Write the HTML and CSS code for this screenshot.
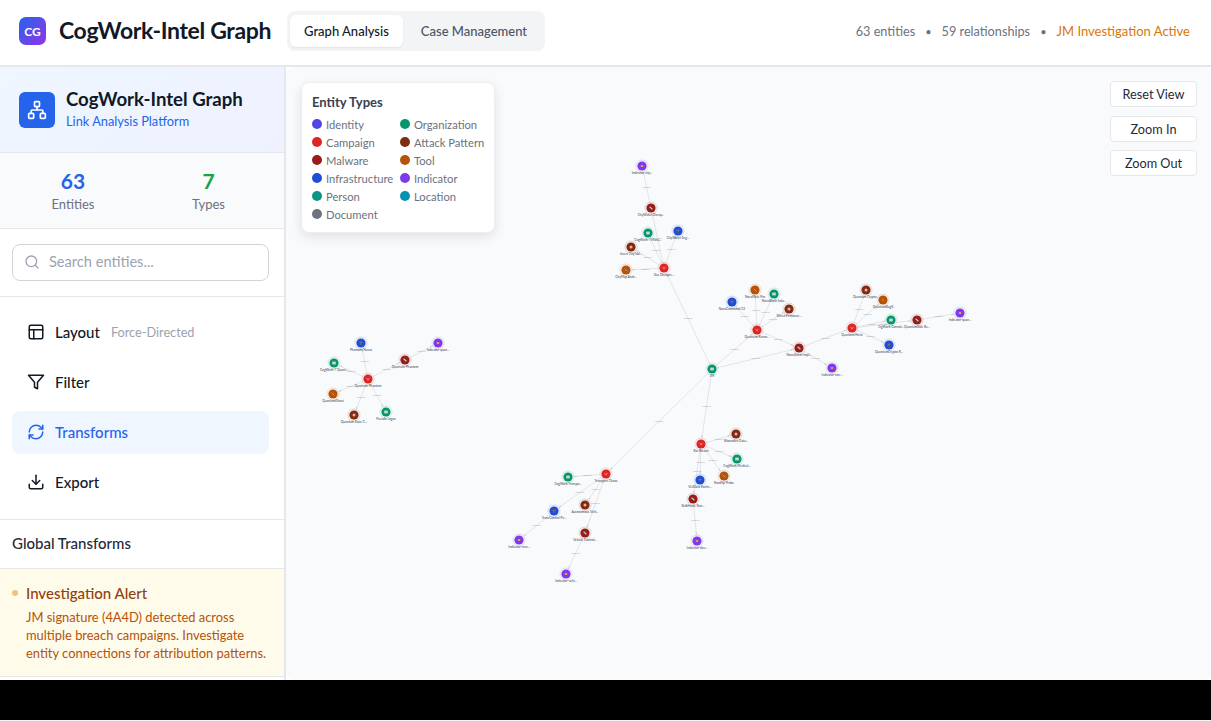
FILE: index.html
```html
<!DOCTYPE html>
<html lang="en">
<head>
    <meta charset="UTF-8">
    <meta name="viewport" content="width=device-width, initial-scale=1.0">
    <title>CogWork-Intel Graph</title>
    <link rel="stylesheet" href="styles.css">
</head>
<body>

<div class="app">
    <header class="topbar">
        <div class="logo">CG</div>
        <div class="app-title">CogWork-Intel Graph</div>
        <nav class="tabs">
            <div class="tab active">Graph Analysis</div>
            <div class="tab">Case Management</div>
        </nav>
        <div class="top-stats">
            <span>63 entities</span>
            <span class="sep">•</span>
            <span>59 relationships</span>
            <span class="sep">•</span>
            <span class="active-case">JM Investigation Active</span>
        </div>
    </header>

    <div class="workspace">
        <aside class="sidebar">
            <div class="side-head">
                <div class="side-icon">
                    <svg viewBox="0 0 24 24" width="20" height="20" fill="none" stroke="#fff" stroke-width="2" stroke-linecap="round" stroke-linejoin="round">
                        <rect x="16" y="16" width="6" height="6" rx="1"/>
                        <rect x="2" y="16" width="6" height="6" rx="1"/>
                        <rect x="9" y="2" width="6" height="6" rx="1"/>
                        <path d="M5 16v-3a1 1 0 0 1 1-1h12a1 1 0 0 1 1 1v3"/>
                        <path d="M12 12V8"/>
                    </svg>
                </div>
                <div class="side-text">
                    <div class="side-title">CogWork-Intel Graph</div>
                    <div class="side-sub">Link Analysis Platform</div>
                </div>
            </div>

            <div class="side-stats">
                <div class="stat">
                    <div class="stat-num blue">63</div>
                    <div class="stat-label">Entities</div>
                </div>
                <div class="stat">
                    <div class="stat-num green">7</div>
                    <div class="stat-label">Types</div>
                </div>
            </div>

            <div class="search-wrap">
                <div class="search">
                    <svg viewBox="0 0 24 24" width="16" height="16" fill="none" stroke="#9ca3af" stroke-width="2" stroke-linecap="round" stroke-linejoin="round">
                        <circle cx="11" cy="11" r="8"/>
                        <path d="m21 21-4.3-4.3"/>
                    </svg>
                    <span>Search entities...</span>
                </div>
            </div>

            <div class="side-nav">
                <div class="nav-item">
                    <svg viewBox="0 0 24 24" width="18" height="18" fill="none" stroke="currentColor" stroke-width="2" stroke-linecap="round" stroke-linejoin="round">
                        <rect x="3" y="3" width="18" height="18" rx="2"/>
                        <path d="M3 9h18"/>
                        <path d="M9 21V9"/>
                    </svg>
                    <span>Layout</span>
                    <small>Force-Directed</small>
                </div>
                <div class="nav-item">
                    <svg viewBox="0 0 24 24" width="18" height="18" fill="none" stroke="currentColor" stroke-width="2" stroke-linecap="round" stroke-linejoin="round">
                        <path d="M22 3H2l8 9.46V19l4 2v-8.54L22 3z"/>
                    </svg>
                    <span>Filter</span>
                </div>
                <div class="nav-item selected">
                    <svg viewBox="0 0 24 24" width="18" height="18" fill="none" stroke="currentColor" stroke-width="2" stroke-linecap="round" stroke-linejoin="round">
                        <path d="M3 12a9 9 0 0 1 9-9 9.75 9.75 0 0 1 6.74 2.74L21 8"/>
                        <path d="M21 3v5h-5"/>
                        <path d="M21 12a9 9 0 0 1-9 9 9.75 9.75 0 0 1-6.74-2.74L3 16"/>
                        <path d="M8 16H3v5"/>
                    </svg>
                    <span>Transforms</span>
                </div>
                <div class="nav-item">
                    <svg viewBox="0 0 24 24" width="18" height="18" fill="none" stroke="currentColor" stroke-width="2" stroke-linecap="round" stroke-linejoin="round">
                        <path d="M21 15v4a2 2 0 0 1-2 2H5a2 2 0 0 1-2-2v-4"/>
                        <path d="m7 10 5 5 5-5"/>
                        <path d="M12 15V3"/>
                    </svg>
                    <span>Export</span>
                </div>
            </div>

            <div class="global-transforms">Global Transforms</div>

            <div class="alert">
                <div class="alert-head">
                    <span class="alert-dot"></span>
                    <span>Investigation Alert</span>
                </div>
                <p>JM signature (4A4D) detected across multiple breach campaigns. Investigate entity connections for attribution patterns.</p>
            </div>
        </aside>

        <main class="canvas">
            <svg class="graph" id="graph" viewBox="286 67 925 613"></svg>

            <div class="legend">
                <div class="legend-title">Entity Types</div>
                <div class="legend-grid">
                    <div class="legend-item"><i class="c-identity"></i>Identity</div>
                    <div class="legend-item"><i class="c-org"></i>Organization</div>
                    <div class="legend-item"><i class="c-campaign"></i>Campaign</div>
                    <div class="legend-item"><i class="c-attack"></i>Attack Pattern</div>
                    <div class="legend-item"><i class="c-malware"></i>Malware</div>
                    <div class="legend-item"><i class="c-tool"></i>Tool</div>
                    <div class="legend-item"><i class="c-infra"></i>Infrastructure</div>
                    <div class="legend-item"><i class="c-indicator"></i>Indicator</div>
                    <div class="legend-item"><i class="c-person"></i>Person</div>
                    <div class="legend-item"><i class="c-location"></i>Location</div>
                    <div class="legend-item"><i class="c-document"></i>Document</div>
                </div>
            </div>

            <div class="controls">
                <button type="button">Reset View</button>
                <button type="button">Zoom In</button>
                <button type="button">Zoom Out</button>
            </div>
        </main>
    </div>
</div>

<div class="blackout"></div>

<script src="graph.js"></script>
</body>
</html>
```

FILE: styles.css
```css
html, body {
    margin: 0;
    padding: 0;
    height: 100%;
    overflow: hidden;
    background-color: #f3f4f6;
    font-family: Lato, "Noto Sans", sans-serif;
}

.app {
    height: 680px;
    display: flex;
    flex-direction: column;
    background-color: #fff;
}

.blackout {
    height: 40px;
    background-color: #000;
}

/* top bar */
.topbar {
    height: 62px;
    flex: none;
    display: flex;
    align-items: center;
    padding: 0 21px 3px 19px;
    background-color: #fff;
    border-bottom: 2px solid #e5e7eb;
}

.logo {
    width: 27px;
    height: 28px;
    border-radius: 7px;
    background: linear-gradient(135deg, #2563eb, #9333ea);
    color: #fff;
    font-size: 12px;
    font-weight: 700;
    display: flex;
    align-items: center;
    justify-content: center;
}

.app-title {
    margin-left: 13px;
    margin-bottom: 3px;
    font-size: 23px;
    font-weight: 700;
    letter-spacing: -0.35px;
    color: #111827;
}

.tabs {
    margin-left: 16px;
    padding: 4px 3px;
    display: flex;
    height: 32px;
    background-color: #f3f4f6;
    border-radius: 8px;
}

.tab {
    padding: 0 15px 0 18px;
    font-size: 13px;
    line-height: 32px;
    font-weight: 500;
    color: #4b5563;
    border-radius: 6px;
}

.tab.active {
    padding: 0 14px;
    background-color: #fff;
    color: #111827;
    box-shadow: 0 1px 2px rgba(0, 0, 0, 0.08);
}

.top-stats {
    margin-left: auto;
    display: flex;
    align-items: center;
    gap: 10px;
    font-size: 12.7px;
    color: #6b7280;
}

.top-stats .sep {
    font-size: 11px;
}

.active-case {
    font-size: 13px;
    color: #d97706;
}

.workspace {
    flex: 1;
    min-height: 0;
    display: flex;
}

/* sidebar */
.sidebar {
    width: 284px;
    flex: none;
    overflow: hidden;
    background-color: #fff;
    border-right: 2px solid #e5e7eb;
}

.side-head {
    height: 85px;
    padding-left: 19px;
    display: flex;
    align-items: center;
    gap: 11px;
    background: linear-gradient(135deg, #eff6ff, #eef2ff);
    border-bottom: 1px solid #e5e7eb;
}

.side-icon {
    width: 36px;
    height: 36px;
    border-radius: 6px;
    background-color: #2563eb;
    display: flex;
    align-items: center;
    justify-content: center;
}

.side-text {
    margin-bottom: 3px;
}

.side-title {
    font-size: 18.6px;
    font-weight: 700;
    color: #111827;
}

.side-sub {
    margin-top: 3px;
    font-size: 12.8px;
    color: #2563eb;
}

.side-stats {
    height: 75px;
    display: grid;
    grid-template-columns: 146px 125px;
    align-items: center;
    text-align: center;
    background-color: #f9fafb;
    border-bottom: 1px solid #e5e7eb;
}

.stat-num {
    font-size: 21px;
    font-weight: 700;
    line-height: 22px;
}

.stat-num.blue { color: #2563eb; }
.stat-num.green { color: #16a34a; }

.stat-label {
    margin-top: 4px;
    font-size: 13px;
    color: #6b7280;
}

.search-wrap {
    height: 68px;
    padding: 15px 15px 0 12px;
    box-sizing: border-box;
    border-bottom: 1px solid #e5e7eb;
}

.search {
    height: 37px;
    box-sizing: border-box;
    padding: 0 0 2px 11px;
    display: flex;
    align-items: center;
    gap: 9px;
    border: 1px solid #d1d5db;
    border-radius: 8px;
    font-size: 14.6px;
    color: #9ca3af;
}

.side-nav {
    height: 223px;
    box-sizing: border-box;
    padding: 14px 15px 0 12px;
    display: flex;
    flex-direction: column;
    gap: 7px;
    border-bottom: 1px solid #e5e7eb;
}

.nav-item {
    height: 43px;
    box-sizing: border-box;
    flex: none;
    padding: 0 0 2px 15px;
    display: flex;
    align-items: center;
    gap: 10px;
    border-radius: 8px;
    font-size: 15px;
    font-weight: 500;
    color: #111827;
}

.nav-item small {
    margin-left: 1px;
    font-size: 12.7px;
    font-weight: 400;
    color: #9ca3af;
}

.nav-item.selected {
    background-color: #eff6ff;
    color: #2563eb;
}

.global-transforms {
    height: 49px;
    box-sizing: border-box;
    padding-left: 12px;
    line-height: 46px;
    font-size: 15px;
    font-weight: 500;
    color: #1f2937;
    border-bottom: 1px solid #e5e7eb;
}

.alert {
    height: 108px;
    box-sizing: border-box;
    padding: 15px 15px 0 12px;
    background-color: #fffbeb;
    border-bottom: 1px solid #e5e7eb;
}

.alert-head {
    display: flex;
    align-items: center;
    gap: 8px;
    font-size: 15px;
    font-weight: 500;
    color: #92400e;
}

.alert-dot {
    width: 6px;
    height: 6px;
    border-radius: 50%;
    background-color: #f3c17b;
}

.alert p {
    margin: 6px 0 0 14px;
    font-size: 12.9px;
    line-height: 18px;
    color: #b45309;
}

/* graph canvas */
.canvas {
    flex: 1;
    position: relative;
    background-color: #f8fafc;
    border-radius: 8px;
    overflow: hidden;
}

.graph {
    position: absolute;
    inset: 0;
    width: 100%;
    height: 100%;
}

.graph .edge {
    stroke: #d9dbe0;
    stroke-width: 0.7;
}

.graph .arrow {
    fill: #c9ccd2;
}

.graph .edge-label {
    font-size: 2.2px;
    fill: #9ca3af;
    text-anchor: middle;
}

.graph .node-label {
    font-size: 3.2px;
    fill: #374151;
    text-anchor: middle;
}

.legend {
    position: absolute;
    top: 15px;
    left: 15px;
    width: 194px;
    height: 151px;
    box-sizing: border-box;
    padding: 11px 10px;
    background-color: #fff;
    border: 1px solid #eceef1;
    border-radius: 8px;
    box-shadow: 0 4px 12px rgba(0, 0, 0, 0.1);
}

.legend-title {
    font-size: 13px;
    font-weight: 700;
    line-height: 16px;
    color: #374151;
}

.legend-grid {
    margin-top: 5px;
    display: grid;
    grid-template-columns: 88px 1fr;
    grid-auto-rows: 18px;
}

.legend-item {
    display: flex;
    align-items: center;
    gap: 4px;
    font-size: 11.2px;
    color: #6b7280;
    white-space: nowrap;
}

.legend-item i {
    width: 10px;
    height: 10px;
    border-radius: 50%;
}

.c-identity { background-color: #4f46e5; }
.c-org { background-color: #059669; }
.c-campaign { background-color: #dc2626; }
.c-attack { background-color: #7c2d12; }
.c-malware { background-color: #991b1b; }
.c-tool { background-color: #b45309; }
.c-infra { background-color: #1d4ed8; }
.c-indicator { background-color: #7c3aed; }
.c-person { background-color: #0d9488; }
.c-location { background-color: #0891b2; }
.c-document { background-color: #6b7280; }

.controls {
    position: absolute;
    top: 14px;
    right: 14px;
    width: 87px;
    display: flex;
    flex-direction: column;
    gap: 8.5px;
}

.controls button {
    height: 26px;
    padding: 0;
    font-family: inherit;
    font-size: 12.7px;
    color: #1f2937;
    background-color: #fff;
    border: 1px solid #e5e7eb;
    border-radius: 4px;
}
```

FILE: graph.js
```js
const COLORS = {
    campaign: "#dc2626",
    malware: "#991b1b",
    attack: "#7c2d12",
    tool: "#b45309",
    org: "#059669",
    infra: "#1d4ed8",
    indicator: "#7c3aed"
};

// id: [type, x, y, label]
const NODES = {
    jm: ["org", 712, 369, "JM"],

    gas: ["campaign", 664, 268, "Gas Disrupte..."],
    g1: ["indicator", 642, 166, "Indicator-city..."],
    g2: ["malware", 651, 208, "CityWater Disrup..."],
    g3: ["org", 648, 233, "CogWork-7 Manu..."],
    g4: ["infra", 678, 231, "CityWater Seg..."],
    g5: ["attack", 631, 247, "Insert CityTabl..."],
    g6: ["tool", 626, 270, "CityMap Andr..."],

    ransom: ["campaign", 757, 330, "Quantum Ranso..."],
    r1: ["infra", 732, 302, "NovaCommand C2"],
    r2: ["tool", 755, 290, "NovaMate Pro"],
    r3: ["org", 774, 294, "NovaBlock Indu..."],
    r4: ["attack", 789, 309, "Wired Firmware..."],
    r5: ["malware", 799, 348, "NovaStorm Impl..."],
    r6: ["indicator", 832, 368, "Indicator-nov..."],

    heist: ["campaign", 852, 328, "Quantum Heist"],
    h1: ["attack", 866, 290, "Quantum Crypto..."],
    h2: ["tool", 883, 300, "QuantumBugX"],
    h3: ["org", 891, 320, "CigWork Control..."],
    h4: ["malware", 917, 320, "QuantumSide Re..."],
    h5: ["infra", 889, 345, "QuantumCrypto R..."],
    h6: ["indicator", 960, 313, "Indicator-quan..."],

    phantom: ["campaign", 368, 379, "Quantum Phantom"],
    p1: ["infra", 361, 343, "Phantom Nexus"],
    p2: ["org", 334, 363, "CogWork-7 Quant..."],
    p3: ["tool", 333, 394, "QuantumGhost"],
    p4: ["attack", 354, 415, "Quantum State C..."],
    p5: ["org", 386, 412, "Pseudo Logos"],
    p6: ["malware", 405, 360, "Quantum Phantom"],
    p7: ["indicator", 438, 343, "Indicator-quan..."],

    breach: ["campaign", 701, 444, "Bar Breach"],
    b1: ["attack", 736, 434, "Bitwarden Data..."],
    b2: ["org", 737, 459, "CogWork Medical..."],
    b3: ["tool", 724, 476, "NordVp Probe"],
    b4: ["infra", 700, 480, "VeilData Exchn..."],
    b5: ["malware", 693, 499, "BulkHaste Nan..."],
    b6: ["indicator", 697, 541, "Indicator-doc..."],

    chaos: ["campaign", 606, 474, "Transport Chaos"],
    c1: ["org", 568, 477, "CogWork Transpo..."],
    c2: ["infra", 554, 511, "TransControl Pv..."],
    c3: ["attack", 585, 505, "Autonomous Vehi..."],
    c4: ["malware", 585, 533, "Vehicle Control..."],
    c5: ["indicator", 519, 540, "Indicator-tran..."],
    c6: ["indicator", 566, 574, "Indicator-vehi..."]
};

const EDGES = [
    ["jm", "gas"], ["gas", "g2"], ["g2", "g1"], ["gas", "g3"], ["gas", "g4"], ["gas", "g5"], ["gas", "g6"],
    ["jm", "ransom"], ["ransom", "r1"], ["ransom", "r2"], ["ransom", "r3"], ["ransom", "r4"], ["ransom", "r5"], ["r5", "r6"],
    ["jm", "r5"], ["r5", "heist"], ["heist", "h1"], ["heist", "h2"], ["heist", "h3"], ["heist", "h4"], ["heist", "h5"], ["h4", "h6"],
    ["phantom", "p1"], ["phantom", "p2"], ["phantom", "p3"], ["phantom", "p4"], ["phantom", "p5"], ["phantom", "p6"], ["p6", "p7"],
    ["jm", "breach"], ["breach", "b1"], ["breach", "b2"], ["breach", "b3"], ["breach", "b4"], ["breach", "b5"], ["b5", "b6"],
    ["jm", "chaos"], ["chaos", "c1"], ["chaos", "c2"], ["chaos", "c3"], ["chaos", "c4"], ["c2", "c5"], ["c4", "c6"]
];

const svg = document.getElementById("graph");

function add(parent, tag, attrs, text) {
    const el = document.createElementNS("http://www.w3.org/2000/svg", tag);
    Object.keys(attrs).forEach(key => el.setAttribute(key, attrs[key]));
    if (text) el.textContent = text;
    parent.appendChild(el);
    return el;
}

// little mark in the middle of each node
function drawMark(type, x, y) {
    if (type === "campaign") {
        add(svg, "path", { d: `M${x - 1.5} ${y - 1.2}L${x} ${y + 1.2}L${x + 1.5} ${y - 1.2}`, fill: "none", stroke: "#fca5a5", "stroke-width": 0.7 });
    } else if (type === "malware") {
        add(svg, "path", { d: `M${x - 1.4} ${y - 1.2}L${x + 1.4} ${y + 1.2}`, stroke: "#86efac", "stroke-width": 1.2 });
    } else if (type === "attack") {
        add(svg, "circle", { cx: x, cy: y, r: 1.5, fill: "#f9a8a8" });
    } else if (type === "tool") {
        add(svg, "path", { d: `M${x - 1.3} ${y - 1.3}L${x + 1.3} ${y + 1.3}`, stroke: "#9ca3af", "stroke-width": 0.9 });
    } else if (type === "org") {
        add(svg, "rect", { x: x - 1.8, y: y - 1.4, width: 3.6, height: 2.8, fill: "#d1d5db" });
    } else if (type === "infra") {
        add(svg, "path", { d: `M${x - 1.6} ${y - 0.8}H${x + 1.6}M${x} ${y - 0.8}V${y + 1.6}`, stroke: "#d97706", "stroke-width": 0.7 });
    } else {
        add(svg, "rect", { x: x - 1.2, y: y - 1, width: 2.4, height: 2, fill: "#fb923c" });
    }
}

EDGES.forEach(([from, to]) => {
    const a = NODES[from];
    const b = NODES[to];
    add(svg, "line", { class: "edge", x1: a[1], y1: a[2], x2: b[1], y2: b[2] });
    add(svg, "text", { class: "edge-label", x: (a[1] + b[1]) / 2, y: (a[2] + b[2]) / 2 + 0.7 }, "linked to");

    // arrow head just outside the target node
    const len = Math.hypot(b[1] - a[1], b[2] - a[2]);
    const ux = (b[1] - a[1]) / len;
    const uy = (b[2] - a[2]) / len;
    const tipX = b[1] - ux * 6.5;
    const tipY = b[2] - uy * 6.5;
    const baseX = tipX - ux * 2;
    const baseY = tipY - uy * 2;
    add(svg, "polygon", {
        class: "arrow",
        points: `${tipX},${tipY} ${baseX - uy},${baseY + ux} ${baseX + uy},${baseY - ux}`
    });
});

Object.values(NODES).forEach(([type, x, y, label]) => {
    add(svg, "circle", { cx: x, cy: y, r: 6.5, fill: COLORS[type], opacity: 0.18 });
    add(svg, "circle", { cx: x, cy: y, r: 5.6, fill: "#fff", opacity: 0.75 });
    add(svg, "circle", { cx: x, cy: y, r: 4.6, fill: COLORS[type] });
    drawMark(type, x, y);
    add(svg, "text", { class: "node-label", x: x, y: y + 8 }, label);
});
```
